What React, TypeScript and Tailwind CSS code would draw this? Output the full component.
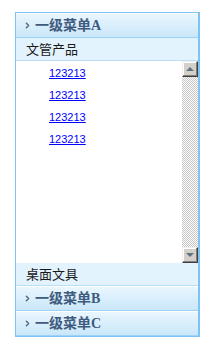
import { ChevronRight } from 'lucide-react';

const links = ['123213', '123213', '123213', '123213'];

function MenuHeader({ label }: { label: string }) {
  return (
    <div className="flex h-[25px] items-center border-b border-[#9fd2f6] border-t border-t-white bg-gradient-to-b from-[#eaf6fe] to-[#c9e7fa] pl-[7px]">
      <ChevronRight size={9} strokeWidth={4} className="text-[#4f6a84]" />
      <span className="ml-[3px] font-['Liberation_Serif','Noto_Sans_CJK_SC',serif] text-[14px] font-bold leading-none text-[#3e5a7c]">
        {label}
      </span>
    </div>
  );
}

function SubItem({ label }: { label: string }) {
  return (
    <div className="flex h-[23px] items-center border-b border-[#b8def8] bg-[#e3f3fd] pl-[10px] font-['Noto_Sans_CJK_SC',sans-serif] text-[13px] text-[#1a1a1a]">
      {label}
    </div>
  );
}

function ScrollButton({ up }: { up: boolean }) {
  return (
    <div className="flex h-[16px] w-[16px] items-center justify-center border border-t-[#f0f0f0] border-l-[#f0f0f0] border-r-[#404040] border-b-[#404040] bg-[#d4d0c8] shadow-[inset_-1px_-1px_0_#808080,inset_1px_1px_0_#ffffff]">
      <div
        className={
          up
            ? 'h-0 w-0 border-x-[4px] border-b-[4px] border-x-transparent border-b-[#5f7387]'
            : 'h-0 w-0 border-x-[4px] border-t-[4px] border-x-transparent border-t-[#5f7387]'
        }
      />
    </div>
  );
}

export default function App() {
  return (
    <div className="min-h-screen bg-white pt-[12px] pl-[15px]">
      <div className="w-[185px] border-l border-t border-b border-r-2 border-[#7cc3f6]">
        <MenuHeader label="一级菜单A" />
        <SubItem label="文管产品" />
        <div className="flex h-[202px]">
          <div className="flex flex-1 flex-col bg-white pt-[1px] pl-[33px]">
            {links.map((l, i) => (
              <a
                key={i}
                href="#"
                className="flex h-[22px] items-center font-['Liberation_Sans',Arial,sans-serif] text-[11px] text-[#0000ff] underline"
              >
                {l}
              </a>
            ))}
          </div>
          <div className="flex w-[16px] flex-col bg-[image:repeating-conic-gradient(#c4c4c4_0_25%,#ffffff_0_50%)] bg-[length:2px_2px]">
            <ScrollButton up />
            <div className="flex-1" />
            <ScrollButton up={false} />
          </div>
        </div>
        <SubItem label="桌面文具" />
        <MenuHeader label="一级菜单B" />
        <MenuHeader label="一级菜单C" />
      </div>
    </div>
  );
}
